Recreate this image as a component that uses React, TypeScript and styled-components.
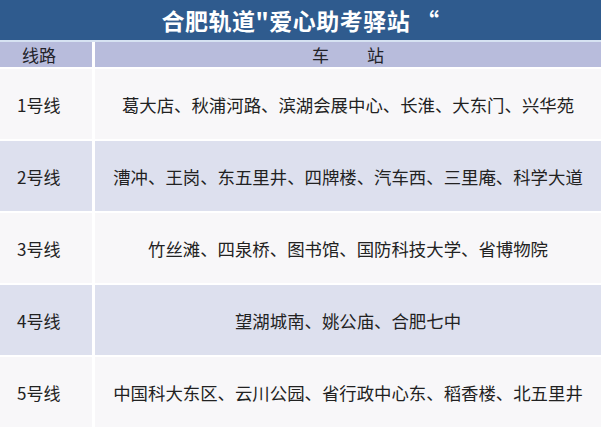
import React from "react";
import styled, { createGlobalStyle } from "styled-components";

const Global = createGlobalStyle`
  html, body { margin: 0; padding: 0; background: #ffffff; }
  body { font-family: "Noto Sans CJK SC", "Noto Sans", sans-serif; }
`;

const Page = styled.div`
  width: 601px;
  height: 427px;
  overflow: hidden;
  background: #ffffff;
  display: flex;
  flex-direction: column;
`;

const TitleBar = styled.div`
  height: 43px;
  background: #2f5b8e;
  color: #ffffff;
  font-size: 23px;
  font-weight: 700;
  display: flex;
  align-items: center;
  justify-content: center;
  border-bottom: 2px solid #d6e2f2;
  letter-spacing: 0.5px;
`;

const Grid = styled.div`
  display: grid;
  grid-template-columns: 92px 1fr;
  column-gap: 3px;
  row-gap: 2px;
  background: #ffffff;
`;

const HeadCell = styled.div<{ $center?: boolean }>`
  height: 25px;
  background: #b8bcdc;
  color: #222228;
  font-size: 17px;
  display: flex;
  align-items: center;
  justify-content: ${(p) => (p.$center ? "center" : "flex-start")};
  padding-left: ${(p) => (p.$center ? "0" : "22px")};
  white-space: pre;
`;

const LineCell = styled.div<{ $alt: boolean }>`
  height: 70px;
  background: ${(p) => (p.$alt ? "#dde0ee" : "#f8f7f9")};
  color: #222222;
  font-size: 17px;
  display: flex;
  align-items: center;
  padding-left: 17px;
`;

const StationCell = styled.div<{ $alt: boolean }>`
  height: 70px;
  background: ${(p) => (p.$alt ? "#dde0ee" : "#f8f7f9")};
  color: #222222;
  font-size: 17.4px;
  display: flex;
  align-items: center;
  justify-content: center;
  white-space: nowrap;
`;

const rows = [
  ["1号线", "葛大店、秋浦河路、滨湖会展中心、长淮、大东门、兴华苑"],
  ["2号线", "漕冲、王岗、东五里井、四牌楼、汽车西、三里庵、科学大道"],
  ["3号线", "竹丝滩、四泉桥、图书馆、国防科技大学、省博物院"],
  ["4号线", "望湖城南、姚公庙、合肥七中"],
  ["5号线", "中国科大东区、云川公园、省行政中心东、稻香楼、北五里井"],
];

export default function App() {
  return (
    <Page>
      <Global />
      <TitleBar>合肥轨道"爱心助考驿站 “</TitleBar>
      <Grid>
        <HeadCell>线路</HeadCell>
        <HeadCell $center>{"车          站"}</HeadCell>
        {rows.map(([line, stations], i) => (
          <React.Fragment key={line}>
            <LineCell $alt={i % 2 === 1}>{line}</LineCell>
            <StationCell $alt={i % 2 === 1}>{stations}</StationCell>
          </React.Fragment>
        ))}
      </Grid>
    </Page>
  );
}
